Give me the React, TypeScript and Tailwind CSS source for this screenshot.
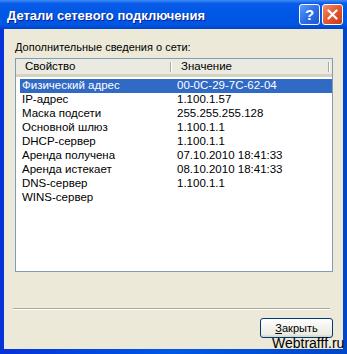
import React from "react";

const rows: [string, string][] = [
  ["Физический адрес", "00-0C-29-7C-62-04"],
  ["IP-адрес", "1.100.1.57"],
  ["Маска подсети", "255.255.255.128"],
  ["Основной шлюз", "1.100.1.1"],
  ["DHCP-сервер", "1.100.1.1"],
  ["Аренда получена", "07.10.2010 18:41:33"],
  ["Аренда истекает", "08.10.2010 18:41:33"],
  ["DNS-сервер", "1.100.1.1"],
  ["WINS-сервер", ""],
];

export default function App() {
  return (
    <div
      className="relative w-[347px] h-[354px] flex flex-col bg-gradient-to-r from-[#0831D9] via-[#0058E6] to-[#0046C8] overflow-hidden"
      style={{ fontFamily: '"Liberation Sans", Arial, sans-serif' }}
    >
      {/* Title bar */}
      <div className="h-[29px] shrink-0 flex items-center pl-[7px] pr-[4px] bg-[linear-gradient(to_bottom,#3D8CF7_0%,#0A5CE8_12%,#0058E6_40%,#0055E3_85%,#0045C7_100%)]">
        <div className="flex-1 text-white font-bold text-[13px] leading-none pt-[1px] [text-shadow:1px_1px_0_#0A1E8C]">
          Детали сетевого подключения
        </div>
        <div className="flex gap-[2px] mb-[1px]">
          <div className="w-[21px] h-[21px] rounded-[3px] border border-white flex items-center justify-center bg-[linear-gradient(135deg,#5C9CFF_0%,#2E6FEA_50%,#1E55D0_100%)] text-white font-bold text-[15px] leading-none">
            ?
          </div>
          <div className="w-[21px] h-[21px] rounded-[3px] border border-white flex items-center justify-center bg-[linear-gradient(135deg,#F0906E_0%,#E2572F_50%,#C83C15_100%)]">
            <svg width="11" height="11" viewBox="0 0 11 11">
              <path d="M1.5 1.5 L9.5 9.5 M9.5 1.5 L1.5 9.5" stroke="white" strokeWidth="2.2" strokeLinecap="round" />
            </svg>
          </div>
        </div>
      </div>

      {/* Client area */}
      <div className="flex-1 ml-[4px] mr-[4px] mb-[5px] bg-[#ECE9D8] flex flex-col">
        <div className="mt-[11px] ml-[11px] text-[11px] leading-[14px] text-black">
          <span className="underline">Д</span>ополнительные сведения о сети:
        </div>

        {/* List view */}
        <div className="mt-[4px] ml-[11px] w-[318px] h-[214px] border border-[#7F9DB9] bg-white flex flex-col">
          <div className="h-[18px] shrink-0 flex bg-[#EBEAE0] border-b-[3px] border-[#D6D2C2] text-[11.5px] text-black leading-none">
            <div className="w-[156px] flex items-center pl-[9px] relative">
              Свойство
              <div className="absolute right-0 top-[3px] bottom-[2px] w-[2px] border-l border-[#ACA899] border-r border-r-white" />
            </div>
            <div className="w-[158px] flex items-center pl-[9px] relative">
              Значение
              <div className="absolute right-0 top-[3px] bottom-[2px] w-[2px] border-l border-[#ACA899] border-r border-r-white" />
            </div>
            <div className="flex-1" />
          </div>
          <div className="pt-[2px] pl-[4px] flex flex-col">
            {rows.map(([k, v], i) => (
              <div
                key={k}
                className={
                  "h-[14px] flex items-center text-[11.5px] leading-none " +
                  (i === 0 ? "bg-[#316AC5] text-white" : "text-black")
                }
              >
                <div className="w-[153px] pl-[2px] whitespace-nowrap">{k}</div>
                <div className="pl-[4px] whitespace-nowrap">{v}</div>
              </div>
            ))}
          </div>
        </div>

        <div className="flex-1" />

        {/* Separator */}
        <div className="ml-[9px] w-[317px] h-[2px] border-t border-[#ACA899] border-b border-b-white" />

        <div className="flex justify-end pr-[10px] mt-[8px] mb-[11px]">
          <div className="w-[73px] h-[20px] rounded-[3px] border border-[#003C74] bg-[linear-gradient(to_bottom,#FFFFFF_0%,#F4F4F0_40%,#ECEBE6_85%,#D6D0C5_100%)] flex items-center justify-center text-[11px] leading-none text-black">
            <span className="underline">З</span>акрыть
          </div>
        </div>
      </div>

      {/* Watermark */}
      <div className="absolute left-[272px] top-[336px] text-[14px] leading-[14px] text-black">
        Webtrafff.ru
      </div>
    </div>
  );
}
